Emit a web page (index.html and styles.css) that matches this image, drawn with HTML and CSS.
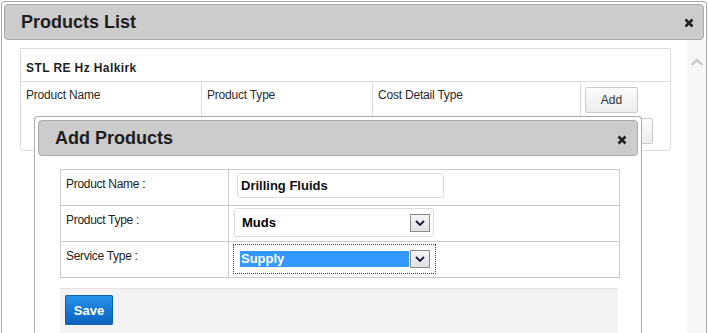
FILE: index.html
```html
<!DOCTYPE html>
<html>
<head>
<meta charset="utf-8">
<title>Products List</title>
<link rel="stylesheet" href="styles.css">
</head>
<body>
<div class="dialog outer">
  <div class="titlebar">
    <span class="title">Products List</span>
    <span class="close" title="close"><svg width="10" height="10" viewBox="0 0 10 10"><path d="M1.5 1.5 L8.5 8.5 M8.5 1.5 L1.5 8.5" stroke="#222" stroke-width="2.6" fill="none"/></svg></span>
  </div>
  <div class="outer-body">
    <div class="main">
      <div class="panel">
        <div class="panel-head">STL RE Hz Halkirk</div>
        <div class="grid">
          <div class="cell">Product Name</div>
          <div class="cell">Product Type</div>
          <div class="cell">Cost Detail Type</div>
          <div class="cell actions">
            <button class="btn">Add</button>
            <button class="btn wide">Cancel</button>
          </div>
        </div>
      </div>
    </div>
    <div class="scroll">
      <svg width="14" height="8" viewBox="0 0 14 8"><path d="M1.5 7 L7 1.8 L12.5 7" stroke="#c8c8c8" stroke-width="2.4" fill="none"/></svg>
    </div>
  </div>
</div>

<div class="dialog modal">
  <div class="titlebar">
    <span class="title">Add Products</span>
    <span class="close" title="close"><svg width="10" height="10" viewBox="0 0 10 10"><path d="M1.5 1.5 L8.5 8.5 M8.5 1.5 L1.5 8.5" stroke="#222" stroke-width="2.6" fill="none"/></svg></span>
  </div>
  <div class="modal-body">
    <div class="form">
      <div class="label">Product Name :</div>
      <div class="value"><div class="input">Drilling Fluids</div></div>
      <div class="label">Product Type :</div>
      <div class="value">
        <div class="select">
          <span class="val">Muds</span>
          <span class="arrow"><svg width="10" height="6" viewBox="0 0 10 6"><path d="M1 1 L5 5 L9 1" stroke="#1a1a3a" stroke-width="1.8" fill="none"/></svg></span>
        </div>
      </div>
      <div class="label">Service Type :</div>
      <div class="value">
        <div class="select focused">
          <span class="val selected">Supply</span>
          <span class="arrow"><svg width="10" height="6" viewBox="0 0 10 6"><path d="M1 1 L5 5 L9 1" stroke="#1a1a3a" stroke-width="1.8" fill="none"/></svg></span>
        </div>
      </div>
    </div>
    <div class="footer">
      <button class="save">Save</button>
    </div>
  </div>
</div>
</body>
</html>
```

FILE: styles.css
```css
html, body {
  margin: 0;
  padding: 0;
  width: 708px;
  height: 333px;
  overflow: hidden;
  background: #ffffff;
}

body {
  font-family: "Liberation Sans", Arial, sans-serif;
  font-size: 12px;
  color: #222222;
  position: relative;
}

* { box-sizing: border-box; }

.dialog {
  background: #ffffff;
  border: 1px solid #aaaaaa;
}

.outer {
  margin: 1px 0 0 1px;
  width: 706px;
  height: 332px;
  border-bottom: none;
  border-radius: 4px 4px 0 0;
  display: flex;
  flex-direction: column;
}

.titlebar {
  height: 36px;
  flex: none;
  background: #cccccc;
  border: 1px solid #aaaaaa;
  border-radius: 4px;
  display: flex;
  align-items: center;
  justify-content: space-between;
}

.outer .titlebar {
  margin: 2px 2px 0 2px;
  padding: 0 9px 0 16px;
}

.title {
  font-size: 18px;
  font-weight: bold;
  color: #1e1e1e;
  line-height: 20px;
}

.close {
  display: flex;
  width: 10px;
  height: 10px;
  margin-top: 2px;
}

.outer-body {
  flex: 1;
  display: flex;
}

.main {
  flex: 1;
  padding: 8px 16px 0 18px;
}

.scroll {
  width: 19px;
  background: #f6f6f6;
  display: flex;
  justify-content: center;
  align-items: flex-start;
  padding-top: 18px;
}

.panel {
  width: 651px;
  border: 1px solid #dddddd;
  border-radius: 0 0 4px 4px;
}

.panel-head {
  height: 33px;
  border-bottom: 1px solid #dddddd;
  padding: 12px 0 0 5px;
  font-weight: bold;
  line-height: 14px;
  letter-spacing: 0.4px;
  color: #1e1e1e;
}

.grid {
  display: grid;
  grid-template-columns: 181px 171px 208px 1fr;
  height: 68px;
}

.cell {
  border-right: 1px solid #dddddd;
  padding: 6px 0 0 5px;
  line-height: 14px;
  letter-spacing: -0.2px;
  color: #2a2a2a;
}

.cell.actions {
  border-right: none;
  padding: 5px 0 0 4px;
  display: flex;
  flex-direction: column;
  align-items: flex-start;
  gap: 5px;
}

.btn {
  font-family: "Liberation Sans", Arial, sans-serif;
  font-size: 12px;
  color: #333333;
  width: 53px;
  height: 26px;
  border: 1px solid #cccccc;
  border-radius: 2px;
  background: linear-gradient(#fbfbfb, #ececec);
  padding: 0;
}

.btn.wide {
  width: 68px;
  color: transparent;
}

/* modal dialog over the list */
.modal {
  position: absolute;
  left: 34px;
  top: 116px;
  width: 608px;
  height: 217px;
  border-bottom: none;
  border-radius: 4px 4px 0 0;
  padding: 3px 3px 0 3px;
  overflow: hidden;
}

.modal .titlebar {
  padding: 0 10px 0 16px;
}

.modal .close {
  margin-top: 4px;
}

.modal-body {
  padding: 13px 0 0 22px;
}

.form {
  width: 560px;
  display: grid;
  grid-template-columns: 168px 391px;
  border-top: 1px solid #cccccc;
  border-left: 1px solid #cccccc;
}

.label,
.value {
  height: 36px;
  border-right: 1px solid #cccccc;
  border-bottom: 1px solid #cccccc;
}

.label {
  padding: 7px 0 0 5px;
  line-height: 14px;
  letter-spacing: -0.3px;
  color: #222222;
}

.value {
  padding: 2px 0 0 5px;
}

.input {
  margin: 1px 0 0 3px;
  width: 207px;
  height: 25px;
  border: 1px solid #dddddd;
  border-radius: 3px;
  padding: 0 0 0 3px;
  font-size: 13px;
  font-weight: bold;
  line-height: 23px;
  color: #111111;
}

.select {
  width: 200px;
  height: 29px;
  border: 1px solid #dddddd;
  border-radius: 3px;
  display: flex;
  align-items: center;
  padding: 0 3px 0 6px;
  font-size: 13px;
  font-weight: bold;
  color: #000000;
}

.select .val {
  flex: 1;
  padding-left: 1px;
  line-height: 16px;
}

.select.focused {
  width: 203px;
  height: 30px;
  margin-left: -1px;
  border: 1px dotted #444444;
  border-radius: 0;
  padding: 0 5px 0 6px;
}

.select .val.selected {
  background: #3399ff;
  color: #ffffff;
  height: 16px;
  margin-right: 1px;
}

.arrow {
  width: 20px;
  height: 18px;
  border: 1px solid #8a8a8a;
  background: linear-gradient(#f4f4f4, #e2e2e2);
  display: flex;
  align-items: center;
  justify-content: center;
}

.footer {
  margin-top: 10px;
  width: 558px;
  height: 45px;
  background: #f3f3f3;
  border-top: 1px solid #e2e2e2;
  padding: 6px 0 0 5px;
}

.save {
  width: 48px;
  height: 30px;
  border: 1px solid #0c62b4;
  border-radius: 1px;
  background: linear-gradient(#2592ea, #0a63bd);
  color: #ffffff;
  font-family: "Liberation Sans", Arial, sans-serif;
  font-size: 13px;
  font-weight: bold;
  padding: 0;
}
```
